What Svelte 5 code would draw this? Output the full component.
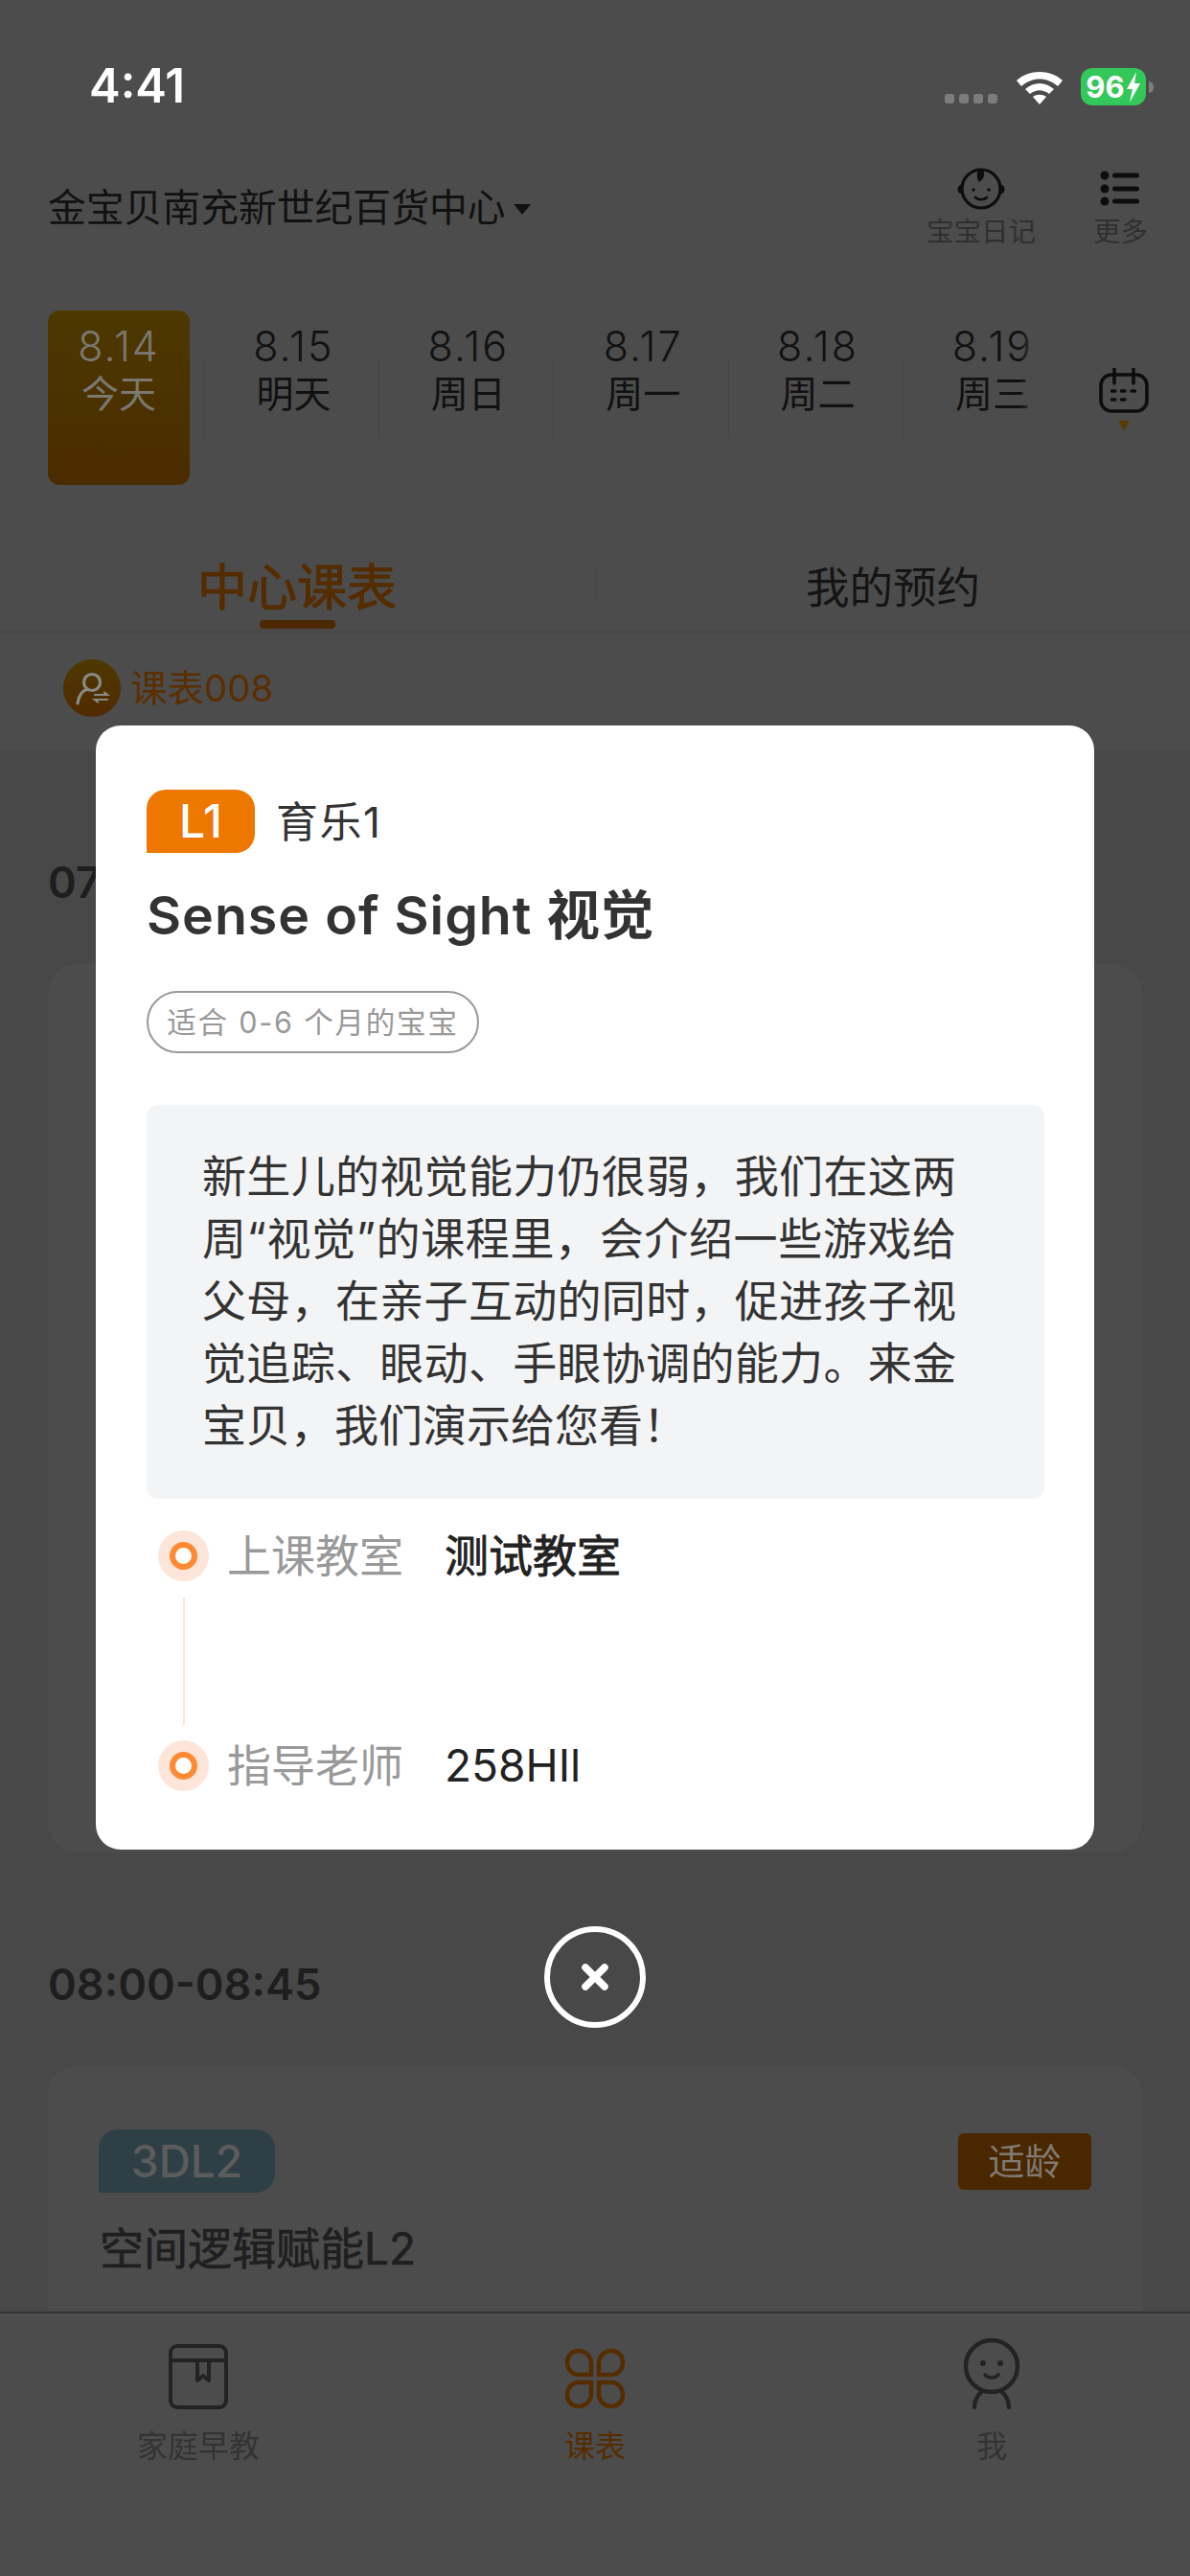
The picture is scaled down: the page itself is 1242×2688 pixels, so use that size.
<script>
  const days = [
    { d: '8.14', w: '今天', on: true },
    { d: '8.15', w: '明天' },
    { d: '8.16', w: '周日' },
    { d: '8.17', w: '周一' },
    { d: '8.18', w: '周二' },
    { d: '8.19', w: '周三' }
  ];
</script>

<div class="page">
  <div class="status">
    <span class="clock">4:41</span>
    <div class="status-right">
      <div class="signal"><i></i><i></i><i></i><i></i></div>
      <svg class="wifi" width="52" height="40" viewBox="0 0 52 40">
        <path d="M2 13 C15 1 37 1 50 13 L45 19 C34 9 18 9 7 19 Z" fill="#fff"/>
        <path d="M11 22 C20 14 32 14 41 22 L36 27 C29 22 23 22 16 27 Z" fill="#fff"/>
        <path d="M19 30 C23 27 29 27 33 30 L26 38 Z" fill="#fff"/>
      </svg>
      <div class="battery">
        <span>96</span>
        <svg width="16" height="32" viewBox="0 0 16 32"><path d="M11 0 L1 18 H7 L4 32 L15 12 H9 Z" fill="#fff"/></svg>
      </div>
      <i class="nub"></i>
    </div>
  </div>

  <div class="header">
    <div class="center-name">金宝贝南充新世纪百货中心<i class="caret"></i></div>
    <div class="actions">
      <div class="action">
        <svg width="52" height="46" viewBox="0 0 52 46" fill="none" stroke="#0d0d0d" stroke-width="3.2" stroke-linecap="round">
          <circle cx="26" cy="23" r="20"/>
          <path d="M6 20 C2 21 2 26 6 27 M46 20 C50 21 50 26 46 27"/>
          <path d="M24 3 C30 3 30 10 24 15 C22 11 22 7 24 3 Z" fill="#0d0d0d" stroke-width="1.5"/>
          <circle cx="18" cy="24" r="1.8" fill="#0d0d0d" stroke="none"/>
          <circle cx="34" cy="24" r="1.8" fill="#0d0d0d" stroke="none"/>
          <path d="M20 32 C23 35 29 35 32 32" stroke-width="2.6"/>
        </svg>
        <span>宝宝日记</span>
      </div>
      <div class="action">
        <svg width="42" height="46" viewBox="0 0 42 46" fill="#0d0d0d">
          <circle cx="5" cy="9" r="4.5"/><circle cx="5" cy="23" r="4.5"/><circle cx="5" cy="36" r="4.5"/>
          <rect x="13" y="6.5" width="28" height="5" rx="2.5"/><rect x="13" y="20.5" width="28" height="5" rx="2.5"/><rect x="13" y="33.5" width="28" height="5" rx="2.5"/>
        </svg>
        <span>更多</span>
      </div>
    </div>
  </div>

  <div class="dates">
    <div class="date-list">
      {#each days as day}
        <div class="date" class:on={day.on}>
          <span class="num">{day.d}</span>
          <span class="week">{day.w}</span>
        </div>
      {/each}
      <div class="fade"></div>
    </div>
    <div class="cal">
      <svg width="52" height="48" viewBox="0 0 52 48" fill="none" stroke="#0d0d0d" stroke-width="3.6" stroke-linecap="round">
        <rect x="2" y="7" width="48" height="38" rx="11"/>
        <path d="M16 1 V16 M36 1 V16"/>
        <path d="M13.5 24 H17 M23.5 24 H27 M34 24 H37.5 M13.5 33 H17 M23.5 33 H27" stroke-width="3.4"/>
      </svg>
      <i class="cal-caret"></i>
    </div>
  </div>

  <div class="tabs">
    <div class="tab active">中心课表<i></i></div>
    <div class="tab">我的预约</div>
  </div>

  <div class="sub">
    <span class="sub-icon">
      <svg width="60" height="60" viewBox="0 0 60 60" fill="none" stroke="#8a8a86" stroke-width="3.2" stroke-linecap="round">
        <circle cx="30" cy="24" r="8.5"/>
        <path d="M15 46 C16 37 20 33 25 31"/>
        <path d="M33 37 H46 L43 34.5 M46 42 H33 L36 44.5" stroke-width="2.2"/>
      </svg>
    </span>
    课表008
  </div>

  <div class="list">
    <div class="time">07:00-07:45</div>
    <div class="card first"></div>
    <div class="time">08:00-08:45</div>
    <div class="card">
      <div class="card-top">
        <span class="level">3DL2</span>
        <span class="age">适龄</span>
      </div>
      <div class="card-title">空间逻辑赋能L2</div>
    </div>
  </div>

  <div class="tabbar">
    <div class="bar-item">
      <svg width="62" height="68" viewBox="0 0 62 68" fill="none" stroke="#232323" stroke-width="4" stroke-linejoin="round">
        <rect x="2" y="2" width="58" height="64" rx="7"/>
        <path d="M2 17 H60 M30 17 V38 L36 33 L42 38 V17"/>
      </svg>
      <span>家庭早教</span>
    </div>
    <div class="bar-item active">
      <svg width="64" height="64" viewBox="0 0 64 64" fill="none" stroke="#552c00" stroke-width="4.4">
        <path d="M15 3 C22 3 28 9 28 16 V28 H15 C8 28 3 22 3 15 C3 8 8 3 15 3 Z"/>
        <path d="M49 3 C42 3 36 9 36 16 V28 H49 C56 28 61 22 61 15 C61 8 56 3 49 3 Z"/>
        <path d="M15 61 C22 61 28 55 28 48 V36 H15 C8 36 3 42 3 49 C3 56 8 61 15 61 Z"/>
        <path d="M49 61 C42 61 36 55 36 48 V36 H49 C56 36 61 42 61 49 C61 56 56 61 49 61 Z"/>
      </svg>
      <span>课表</span>
    </div>
    <div class="bar-item">
      <svg width="62" height="74" viewBox="0 0 62 74" fill="none" stroke="#232323" stroke-width="4.4" stroke-linecap="round">
        <circle cx="31" cy="29" r="27"/>
        <circle cx="22" cy="26" r="3" fill="#232323" stroke="none"/>
        <circle cx="40" cy="26" r="3" fill="#232323" stroke="none"/>
        <path d="M24 38 C27 42 35 42 38 38" stroke-width="3.6"/>
        <path d="M13 72 C13 64 16 60 20 56 M49 72 C49 64 46 60 42 56"/>
      </svg>
      <span>我</span>
    </div>
  </div>

  <div class="scrim">
    <div class="modal">
      <div class="modal-head">
        <span class="modal-level">L1</span>
        <span class="modal-name">育乐1</span>
      </div>
      <h2>Sense of Sight 视觉</h2>
      <span class="pill">适合 0-6 个月的宝宝</span>
      <p class="desc">新生儿的视觉能力仍很弱，我们在这两周“视觉”的课程里，会介绍一些游戏给父母，在亲子互动的同时，促进孩子视觉追踪、眼动、手眼协调的能力。来金宝贝，我们演示给您看！</p>
      <div class="info">
        <div class="row"><i class="dot"></i><span class="key">上课教室</span><b>测试教室</b></div>
        <i class="connector"></i>
        <div class="row"><i class="dot"></i><span class="key">指导老师</span><span class="val">258HIl</span></div>
      </div>
    </div>
    <button class="close" aria-label="关闭">
      <svg width="30" height="30" viewBox="0 0 30 30" stroke="#fff" stroke-width="7.5" stroke-linecap="round"><path d="M5 5 L25 25 M25 5 L5 25"/></svg>
    </button>
  </div>
</div>

<style>
  :global(body) {
    margin: 0;
    background: #4c4c4c;
  }
  .page {
    position: relative;
    width: 1242px;
    height: 2688px;
    overflow: hidden;
    display: flex;
    flex-direction: column;
    background: #4c4c4c;
    color: #0f0f0f;
    font-family: Inter, "Noto Sans CJK SC", sans-serif;
  }
  i { display: block; font-style: normal; }

  .status {
    height: 150px;
    flex: none;
    box-sizing: border-box;
    padding: 62px 38px 0 93px;
    display: flex;
    justify-content: space-between;
    align-items: flex-start;
  }
  .clock {
    color: #fff;
    font-size: 49px;
    line-height: 56px;
    font-weight: 600;
  }
  .status-right {
    display: flex;
    align-items: flex-start;
    padding-top: 9px;
  }
  .signal {
    display: flex;
    gap: 5px;
    padding-top: 27px;
    margin-right: 18px;
  }
  .signal i {
    width: 10px;
    height: 10px;
    border-radius: 3px;
    background: #7d7d7d;
  }
  .battery {
    margin-left: 17px;
    width: 68px;
    height: 39px;
    border-radius: 12px;
    background: #34c759;
    color: #fff;
    font-size: 31px;
    font-weight: 700;
    line-height: 39px;
    display: flex;
    align-items: center;
    justify-content: center;
    gap: 1px;
  }
  .nub {
    width: 5px;
    height: 12px;
    margin: 14px 0 0 3px;
    border-radius: 0 6px 6px 0;
    background: #7d7d7d;
  }

  .header {
    height: 174px;
    flex: none;
    box-sizing: border-box;
    padding: 24px 44px 0 50px;
    display: flex;
    justify-content: space-between;
    align-items: flex-start;
  }
  .center-name {
    display: flex;
    align-items: center;
    margin-top: 20px;
    font-size: 39.8px;
    line-height: 46px;
    color: #111;
  }
  .caret {
    width: 0;
    height: 0;
    margin: 2px 0 0 8px;
    border-style: solid;
    border-width: 11px 9px 0;
    border-color: #111 transparent transparent;
  }
  .actions {
    display: flex;
    gap: 60px;
  }
  .action {
    display: flex;
    flex-direction: column;
    align-items: center;
    gap: 7px;
    font-size: 28.5px;
    line-height: 30px;
    color: #2f2f2f;
  }

  .dates {
    height: 182px;
    flex: none;
    display: flex;
    padding-left: 50px;
  }
  .date-list {
    position: relative;
    display: flex;
    width: 1048px;
    overflow: hidden;
  }
  .date {
    position: relative;
    flex: none;
    width: 182.4px;
    box-sizing: border-box;
    padding: 14px 34.4px 0 0;
    display: flex;
    flex-direction: column;
    align-items: center;
    color: #111;
  }
  .date::after {
    content: "";
    position: absolute;
    top: 49px;
    right: 19px;
    width: 1px;
    height: 85px;
    background: #454545;
  }
  .date:last-of-type::after { display: none; }
  .date.on { color: #7a7870; }
  .date.on::before {
    content: "";
    position: absolute;
    inset: 0 34.4px 0 0;
    border-radius: 12px;
    background: linear-gradient(180deg, #4c3800, #4b2b00);
  }
  .date.on > span { position: relative; }
  .num {
    font-size: 43px;
    line-height: 46px;
    font-weight: 300;
    letter-spacing: 2px;
  }
  .week {
    font-size: 39px;
    line-height: 50px;
    margin-top: 2px;
  }
  .fade {
    position: absolute;
    top: 0;
    right: 0;
    width: 34px;
    height: 100%;
    background: linear-gradient(90deg, rgba(76, 76, 76, 0), #4c4c4c 70%);
  }
  .cal {
    margin-left: 49px;
    padding-top: 60px;
    display: flex;
    flex-direction: column;
    align-items: center;
  }
  .cal-caret {
    margin-top: 7px;
    width: 0;
    height: 0;
    border-style: solid;
    border-width: 10px 6.5px 0;
    border-color: #5a3a00 transparent transparent;
  }

  .tabs {
    position: relative;
    height: 156px;
    flex: none;
    box-sizing: border-box;
    padding-top: 78px;
    display: flex;
    border-bottom: 5px solid #484848;
  }
  .tabs::after {
    content: "";
    position: absolute;
    left: 621px;
    top: 86px;
    width: 1px;
    height: 30px;
    background: #454545;
  }
  .tab {
    position: relative;
    flex: 1;
    text-align: center;
    font-size: 45.5px;
    line-height: 60px;
    color: #141414;
  }
  .tab.active {
    font-size: 52px;
    -webkit-text-stroke: 1px #542c00;
    color: #542c00;
    padding-right: 2px;
  }
  .tab.active i {
    position: absolute;
    left: 271px;
    top: 63px;
    width: 79px;
    height: 9px;
    border-radius: 4px;
    background: #4b2800;
    -webkit-text-stroke: 0;
  }

  .sub {
    height: 121px;
    flex: none;
    box-sizing: border-box;
    padding: 26px 0 0 66px;
    display: flex;
    align-items: flex-start;
    gap: 10px;
    font-size: 38.5px;
    line-height: 60px;
    color: #5a2e00;
  }
  .sub-icon {
    width: 60px;
    height: 60px;
    border-radius: 50%;
    background: linear-gradient(180deg, #4e3800, #512a00);
  }
  .sub-icon svg { display: block; }

  .list {
    flex: 1;
    min-height: 0;
    overflow: hidden;
    background: #484848;
    padding: 0 50px;
  }
  .time {
    font-size: 45.2px;
    font-weight: 600;
    line-height: 54px;
    color: #1e1e1e;
    margin-top: 111px;
  }
  .card {
    margin-top: 58px;
    border-radius: 30px;
    background: #4c4c4c;
    min-height: 400px;
    padding: 66px 53px 0;
    box-sizing: border-box;
  }
  .card.first { height: 927px; }
  .card-top {
    display: flex;
    justify-content: space-between;
    align-items: center;
  }
  .level {
    width: 184px;
    height: 66px;
    border-radius: 20px 20px 20px 0;
    background: #2f3f46;
    color: #5c5c5c;
    font-size: 46px;
    font-weight: 500;
    line-height: 66px;
    text-align: center;
  }
  .age {
    width: 139px;
    height: 59px;
    border-radius: 6px;
    background: #4a2700;
    color: #7f7a72;
    font-size: 38px;
    line-height: 59px;
    text-align: center;
  }
  .card-title {
    margin-top: 30px;
    margin-left: 1px;
    font-size: 46px;
    line-height: 56px;
    -webkit-text-stroke: 0.7px #1f1f1f;
    color: #1f1f1f;
  }

  .tabbar {
    height: 276px;
    flex: none;
    box-sizing: border-box;
    border-top: 2px solid #343434;
    background: #4c4c4c;
    display: flex;
    padding-top: 26px;
  }
  .bar-item {
    flex: 1;
    height: 130px;
    display: flex;
    flex-direction: column;
    align-items: center;
    justify-content: flex-end;
    gap: 22px;
    font-size: 32px;
    line-height: 34px;
    color: #333;
    padding-bottom: 2px;
  }
  .bar-item.active { color: #552c00; }

  .scrim {
    position: absolute;
    inset: 0;
    display: flex;
    flex-direction: column;
    align-items: center;
    padding-top: 757px;
    box-sizing: border-box;
  }
  .modal {
    width: 1042px;
    height: 1173px;
    box-sizing: border-box;
    padding: 67px 53px 0;
    background: #fff;
    border-radius: 26px;
    color: #333;
  }
  .modal-head {
    display: flex;
    align-items: center;
    gap: 22px;
  }
  .modal-level {
    width: 113px;
    height: 66px;
    border-radius: 20px 20px 20px 0;
    background: #ee7700;
    color: #fff;
    font-size: 48px;
    line-height: 66px;
    text-align: center;
    font-weight: 500;
  }
  .modal-name {
    font-size: 44px;
    line-height: 60px;
    color: #333;
    padding-top: 2px;
    letter-spacing: 1.5px;
  }
  h2 {
    margin: 27px 0 0;
    font-size: 55.5px;
    line-height: 76px;
    font-weight: 600;
    color: #333;
    letter-spacing: 1px;
  }
  .pill {
    display: inline-block;
    margin-top: 41px;
    box-sizing: border-box;
    width: 347px;
    height: 65px;
    border: 2px solid #999;
    border-radius: 33px;
    text-align: center;
    font-size: 30.5px;
    line-height: 61px;
    color: #999;
    letter-spacing: 1.8px;
    white-space: nowrap;
  }
  .desc {
    margin: 54px 0 0;
    box-sizing: border-box;
    width: 937px;
    height: 411px;
    padding: 42px 92px 43px 58px;
    border-radius: 12px;
    background: #f3f4f6;
    font-size: 46px;
    line-height: 65px;
    color: #333;
    text-align: justify;
  }
  .info {
    margin: 33px 0 0 12px;
  }
  .row {
    display: flex;
    align-items: center;
    height: 53px;
    font-size: 46px;
    line-height: 53px;
  }
  .dot {
    box-sizing: border-box;
    width: 53px;
    height: 53px;
    border-radius: 50%;
    background: #fde6d9;
    border: 12.5px solid #fde6d9;
    position: relative;
    margin-right: 19px;
  }
  .dot::after {
    content: "";
    position: absolute;
    inset: 0;
    box-sizing: border-box;
    border: 6px solid #ff8a33;
    border-radius: 50%;
    background: #fff;
  }
  .key {
    width: 227px;
    color: #999;
  }
  .row b, .val {
    color: #222;
    font-weight: 400;
  }
  .row b { -webkit-text-stroke: 0.8px #222; }
  .connector {
    width: 2px;
    height: 133px;
    margin: 17px 0 16px 25.5px;
    background: #fde2d0;
  }
  .close {
    margin-top: 80px;
    width: 106px;
    height: 106px;
    padding: 0;
    box-sizing: border-box;
    border: 6px solid #fff;
    border-radius: 50%;
    background: transparent;
    display: flex;
    align-items: center;
    justify-content: center;
  }
</style>
